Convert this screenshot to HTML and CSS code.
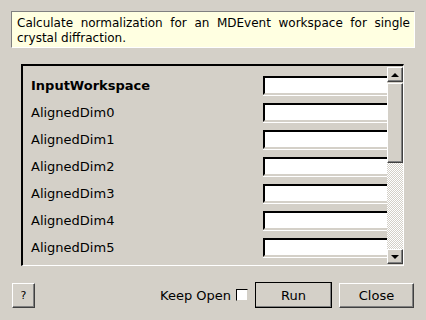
FILE: index.html
```html
<!DOCTYPE html>
<html lang="en">
<head>
    <meta charset="UTF-8">
    <title>Algorithm Dialog</title>
    <link rel="stylesheet" href="styles.css">
</head>
<body>
    <div class="dialog">
        <p class="description">Calculate normalization for an MDEvent workspace for single crystal diffraction.</p>

        <div class="props">
            <div class="props-list">
                <div class="prop"><label class="prop-name bold">InputWorkspace</label><span class="field"></span></div>
                <div class="prop"><label class="prop-name">AlignedDim0</label><span class="field"></span></div>
                <div class="prop"><label class="prop-name">AlignedDim1</label><span class="field"></span></div>
                <div class="prop"><label class="prop-name">AlignedDim2</label><span class="field"></span></div>
                <div class="prop"><label class="prop-name">AlignedDim3</label><span class="field"></span></div>
                <div class="prop"><label class="prop-name">AlignedDim4</label><span class="field"></span></div>
                <div class="prop"><label class="prop-name">AlignedDim5</label><span class="field"></span></div>
            </div>
            <div class="scrollbar">
                <div class="sb-btn"><span class="arrow up"></span></div>
                <div class="sb-thumb"></div>
                <div class="sb-track"></div>
                <div class="sb-btn"><span class="arrow down"></span></div>
            </div>
        </div>

        <div class="actions">
            <button class="btn help">?</button>
            <span class="spacer"></span>
            <label class="keep-open">Keep Open <span class="check"></span></label>
            <button class="btn run">Run</button>
            <button class="btn close">Close</button>
        </div>
    </div>
</body>
</html>
```

FILE: styles.css
```css
body {
    margin: 0;
    background: #d4d0c8;
    font-family: "DejaVu Sans", sans-serif;
    font-size: 12px;
    color: #000;
}

.dialog {
    width: 426px;
    height: 320px;
    display: flex;
    flex-direction: column;
    box-sizing: border-box;
    padding-top: 11px;
}

.description {
    margin: 0 11px;
    height: 37px;
    box-sizing: border-box;
    padding: 4px 4px 0 5px;
    background: #ffffe1;
    border-top: 1px solid #808080;
    border-left: 1px solid #808080;
    border-right: 1px solid #fff;
    border-bottom: 1px solid #fff;
    line-height: 15px;
    text-align: justify;
}

.props {
    margin: 16px 22px 0 21px;
    height: 202px;
    box-sizing: border-box;
    display: flex;
    border-top: 2px solid #000;
    border-left: 2px solid #000;
    border-right: 1px solid #fff;
    border-bottom: 1px solid #fff;
}

.props-list {
    flex: 1;
    overflow: hidden;
    padding: 10px 0 0 8px;
    display: flex;
    flex-direction: column;
    gap: 8px;
}

.prop {
    display: flex;
    align-items: center;
    height: 19px;
    font-size: 13px;
}

.prop-name {
    width: 232px;
    flex-shrink: 0;
}

.bold {
    font-weight: bold;
}

.field {
    flex-shrink: 0;
    width: 200px;
    height: 19px;
    box-sizing: border-box;
    background: #fff;
    border-top: 2px solid #000;
    border-left: 2px solid #000;
    border-bottom: 2px solid #d4d0c8;
    box-shadow: 0 1px 0 #fff;
}

.scrollbar {
    width: 16px;
    display: flex;
    flex-direction: column;
    padding: 1px 0;
}

.sb-btn,
.sb-thumb {
    box-sizing: border-box;
    background: #d4d0c8;
    border-top: 1px solid #fff;
    border-left: 1px solid #fff;
    border-right: 1px solid #404040;
    border-bottom: 1px solid #404040;
    box-shadow: inset -1px -1px 0 #808080;
}

.sb-btn {
    height: 15px;
    display: flex;
    align-items: center;
    justify-content: center;
}

.sb-thumb {
    margin-top: 1px;
    height: 80px;
}

.sb-track {
    flex: 1;
    background: repeating-conic-gradient(#d4d0c8 0 25%, #fff 0 50%) 0 0 / 2px 2px;
}

.arrow {
    width: 0;
    height: 0;
    border-left: 4px solid transparent;
    border-right: 4px solid transparent;
}

.arrow.up {
    border-bottom: 4px solid #000;
}

.arrow.down {
    border-top: 4px solid #000;
}

.actions {
    display: flex;
    align-items: center;
    margin: 16px 12px 0;
    height: 26px;
}

.spacer {
    flex: 1;
}

.btn {
    font-family: "DejaVu Sans", sans-serif;
    font-size: 13px;
    color: #000;
    background: #d4d0c8;
    height: 25px;
    padding: 0;
    box-sizing: border-box;
    border-top: 1px solid #fff;
    border-left: 1px solid #fff;
    border-right: 1px solid #404040;
    border-bottom: 1px solid #404040;
    box-shadow: inset -1px -1px 0 #808080;
}

.help {
    width: 23px;
    font-size: 11px;
}

.keep-open {
    display: flex;
    align-items: center;
    gap: 5px;
    font-size: 13px;
    margin-right: 7px;
}

.check {
    width: 12px;
    height: 12px;
    box-sizing: border-box;
    background: #fff;
    border-top: 1px solid #000;
    border-left: 1px solid #000;
    border-right: 1px solid #d4d0c8;
    border-bottom: 1px solid #d4d0c8;
}

.run {
    width: 77px;
    height: 26px;
    outline: 1px solid #000;
    outline-offset: -1px;
    margin-right: 7px;
}

.close {
    width: 75px;
}
```
